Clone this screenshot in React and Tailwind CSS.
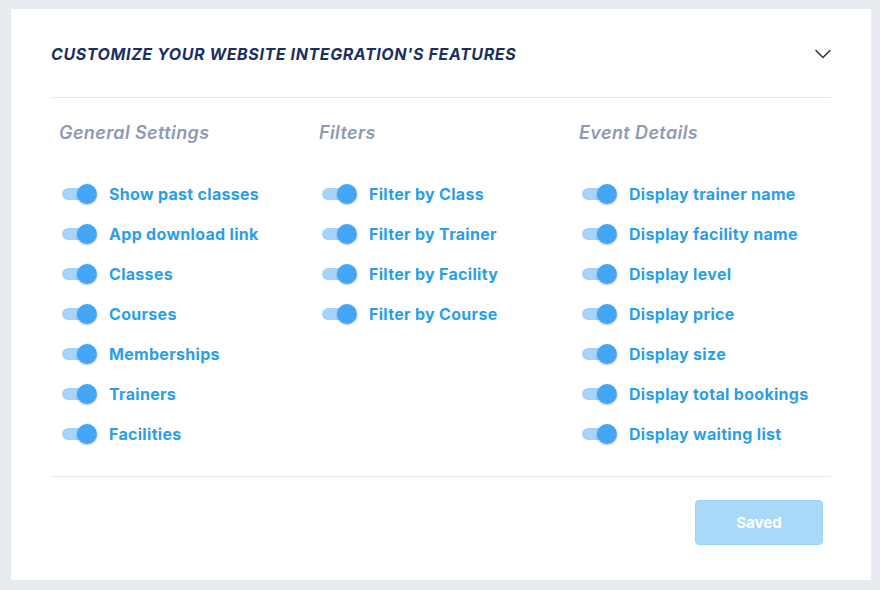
import { ChevronDown } from 'lucide-react';

// --- DATA: kolom pengaturan ---
const columns = [
  {
    title: 'General Settings',
    items: ['Show past classes', 'App download link', 'Classes', 'Courses', 'Memberships', 'Trainers', 'Facilities'],
  },
  {
    title: 'Filters',
    items: ['Filter by Class', 'Filter by Trainer', 'Filter by Facility', 'Filter by Course'],
  },
  {
    title: 'Event Details',
    items: [
      'Display trainer name',
      'Display facility name',
      'Display level',
      'Display price',
      'Display size',
      'Display total bookings',
      'Display waiting list',
    ],
  },
];

function Toggle() {
  return (
    <div className="relative w-[35px] h-[20px] flex items-center shrink-0">
      <div className="w-[34px] h-[12px] rounded-full bg-[#a5d3f9]"></div>
      <div className="absolute right-0 top-0 w-[20px] h-[20px] rounded-full bg-[#42a5f5] shadow-[0_1px_2px_rgba(0,0,0,0.25)]"></div>
    </div>
  );
}

export default function App() {
  return (
    <div className="w-[880px] h-[590px] bg-[#e8ebef] pt-[9px] pl-[11px] font-['Inter',sans-serif]">
      <div className="w-[860px] h-[571px] bg-white px-[40px]">
        {/* Header */}
        <div className="h-[89px] flex items-center justify-between border-b border-[#e4e7ee] pt-[2px]">
          <h2 className="text-[16px] font-bold italic uppercase text-[#1b3060] tracking-[0.6px]">
            Customize your website integration's features
          </h2>
          <ChevronDown className="w-[28px] h-[28px] text-[#333] mr-[-6px]" strokeWidth={1.3} />
        </div>

        {/* Kolom pengaturan */}
        <div className="h-[379px] border-b border-[#e4e7ee] grid grid-cols-[260px_260px_260px] pl-[8px] pt-[23px]">
          {columns.map((col) => (
            <div key={col.title}>
              <h3 className="text-[18px] font-semibold italic text-[#8e9ab2] leading-[24px] mb-[39px] tracking-[0.4px]">{col.title}</h3>
              <div className="flex flex-col gap-[20px] pl-[3px]">
                {col.items.map((item) => (
                  <div key={item} className="flex items-center gap-[12px] h-[20px]">
                    <Toggle />
                    <span className="text-[16px] font-bold text-[#2b9ee8] leading-[20px] tracking-[0.3px]">{item}</span>
                  </div>
                ))}
              </div>
            </div>
          ))}
        </div>

        {/* Tombol simpan */}
        <div className="flex justify-end pt-[23px] pr-[8px]">
          <button className="w-[128px] h-[45px] rounded-[4px] bg-[#a8d9f8] border border-[#9fd2f3] text-white text-[15px] font-bold pt-[2px]">
            Saved
          </button>
        </div>
      </div>
    </div>
  );
}
